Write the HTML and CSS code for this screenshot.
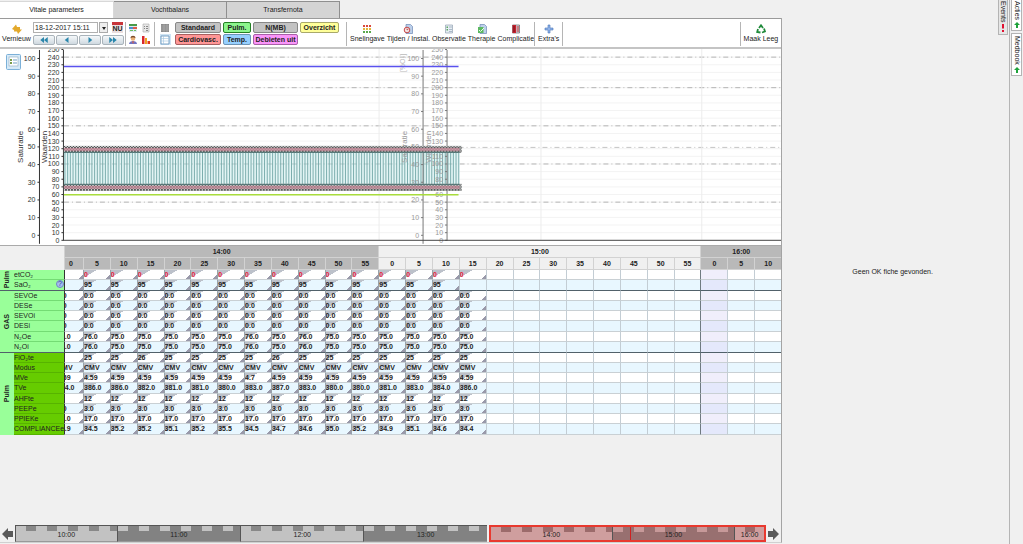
FILE: index.html
```html
<!DOCTYPE html>
<html lang="nl">
<head>
<meta charset="utf-8">
<title>Vitale parameters</title>
<link rel="stylesheet" href="styles.css">
</head>
<body>
<main class="main">
  <nav class="tabs">
    <button class="tab tab-active">Vitale parameters</button>
    <button class="tab">Vochtbalans</button>
    <button class="tab">Transfernota</button>
  </nav>
  <section class="panel">
    <div class="toolbar">
      <button class="tool tool-refresh">
        <svg class="icon" viewBox="0 0 10 10"><path d="M0 5 4 .5 5 3H8V5.500H4.500L4 7ZM10 5.500 6 10 5 7.500H2V5.500H6Z" fill="#e3a92c"/></svg>
        <span>Vernieuw</span>
      </button>
      <div class="dates">
        <div class="date-row">
          <input class="date" aria-label="Datum en tijd" value="18-12-2017 15:11">
          <button class="drop" aria-label="Kies datum"><svg class="arrow" viewBox="0 0 6 6"><path d="M1 2h4L3 5z" fill="#222"/></svg></button>
          <button class="now">NU</button>
        </div>
        <div class="nav-row">
          <button class="nav" aria-label="Ver terug"><svg viewBox="0 0 12 8"><path d="M6 0v8L1 4zM11 0v8L6 4z" fill="#2b86ab"/></svg></button>
          <button class="nav" aria-label="Terug"><svg viewBox="0 0 12 8"><path d="M8 0v8L3 4z" fill="#2b86ab"/></svg></button>
          <button class="nav" aria-label="Vooruit"><svg viewBox="0 0 12 8"><path d="M4 0v8l5-4z" fill="#2b86ab"/></svg></button>
          <button class="nav" aria-label="Ver vooruit"><svg viewBox="0 0 12 8"><path d="M1 0v8l5-4zM6 0v8l5-4z" fill="#2b86ab"/></svg></button>
        </div>
      </div>
      <div class="icon-grid ruled">
        <button class="mini" aria-label="Kalender"><svg class="icon" viewBox="0 0 10 10"><path d="M1 1h8v8H1z" fill="#dfeaf5"/><path d="M1 1h8v2H1z" fill="#4a9a4a"/><path d="M1 4h4v2H1z" fill="#4b8fd0"/><path d="M5 4h4v2H5z" fill="#e05a4a"/><path d="M2 7h3v1H2zM6 7h2v1H6z" fill="#6fbf5f"/></svg></button>
        <button class="mini" aria-label="Lijst"><svg class="icon" viewBox="0 0 10 10"><path d="M2 1h6v8H2z" fill="#e8e8e8" stroke="#aaa" stroke-width=".6"/><path d="M3 3h1v1H3zM5 3h2v1H5zM3 5h1v1H3zM5 5h2v1H5zM5 7h2v1H5z" fill="#888"/></svg></button>
        <button class="mini" aria-label="Patiënt"><svg class="icon" viewBox="0 0 10 10"><path d="M1 9c0-4 8-4 8 0z" fill="#6f74c4"/><circle cx="5" cy="3.500" r="2.300" fill="#eab178"/><path d="M2.500 3c0-3 5-3 5 0L5 2.200z" fill="#7a4a2a"/><path d="M4 6.500h2L5 9z" fill="#e05a3a"/></svg></button>
        <button class="mini" aria-label="Grafiek"><svg class="icon" viewBox="0 0 10 10"><path d="M1 1h2.500v8H1z" fill="#d8262c"/><path d="M4 3h2v6H4z" fill="#f0a020"/><path d="M6.500 6H9v3H6.500z" fill="#e0361c"/></svg></button>
      </div>
      <div class="filters ruled">
        <button class="mini" aria-label="Tabel"><svg class="icon" viewBox="0 0 10 10"><path d="M1 1h8v8H1z" fill="#8b8b8b"/><path d="M1 3h8M1 5h8M1 7h8M4 1v8M7 1v8" stroke="#b8b8b8" stroke-width=".5"/></svg></button>
        <button class="chip chip-gray">Standaard</button>
        <button class="chip chip-green">Pulm.</button>
        <button class="chip chip-gray">N(MB)</button>
        <button class="chip chip-yellow">Overzicht</button>
        <button class="mini mini-on" aria-label="Raster"><svg class="icon" viewBox="0 0 10 10"><path d="M1 1h8v8H1z" fill="#fff" stroke="#5d8eb8" stroke-width=".8"/><path d="M1 3.500h8M1 6h8M3.500 1v8" stroke="#9fc3de" stroke-width=".6"/></svg></button>
        <button class="chip chip-red">Cardiovasc.</button>
        <button class="chip chip-blue">Temp.</button>
        <button class="chip chip-pink">Debieten uit</button>
      </div>
      <div class="tools tools-entry ruled">
        <button class="tool"><svg class="icon" viewBox="0 0 10 10"><path d="M1 1h2v2H1zM4 1h2v2H4zM7 1h2v2H7z" fill="#d9483b"/><path d="M1 4h2v2H1zM4 4h2v2H4zM7 4h2v2H7z" fill="#e5b53a"/><path d="M1 7h2v2H1zM4 7h2v2H4zM7 7h2v2H7z" fill="#5aa84c"/></svg><span>Snelingave</span></button>
        <button class="tool"><svg class="icon" viewBox="0 0 10 10"><path d="M3 .5h4.500L9.500 2.500v7H3z" fill="#bcd0ea" stroke="#6d88b5" stroke-width=".7"/><circle cx="4" cy="6" r="2.800" fill="#f3e4e4" stroke="#c74747"/><path d="M4 4.500V6l1.500-1" fill="none" stroke="#a33" stroke-width=".7"/></svg><span>Tijden / Instal.</span></button>
        <button class="tool"><svg class="icon" viewBox="0 0 10 10"><path d="M1.500 1h7v8h-7z" fill="#e6edf3" stroke="#92a2b2" stroke-width=".7"/><path d="M2.500 2.500h1.500V4H2.500zM2.500 5h1.500v1.500H2.500z" fill="#5ba663"/><path d="M5 3h3M5 5.500h3M5 7.500h3" stroke="#90a4b6" stroke-width=".7"/></svg><span>Observatie</span></button>
        <button class="tool"><svg class="icon" viewBox="0 0 10 10"><path d="M3 .5h4.500L9.500 2.500v7H3z" fill="#bcd0ea" stroke="#6d88b5" stroke-width=".7"/><path d="M1 3h5.500v6H1z" fill="#5cb862"/><path d="M2 6l1.500 1.500L7 4" fill="none" stroke="#e9ffe9"/></svg><span>Therapie</span></button>
        <button class="tool"><svg class="icon" viewBox="0 0 10 10"><path d="M1.500 1h7v8h-7z" fill="#d5d8e2" stroke="#666" stroke-width=".7"/><path d="M1.500 1H5v8H1.500z" fill="#c6202c"/><path d="M5.500 3H8M5.500 5H8M5.500 7H8" stroke="#b22" stroke-width="1"/><path d="M3 2v6" stroke="#501018" stroke-width=".7"/></svg><span>Complicatie</span></button>
      </div>
      <div class="tools tools-extra ruled">
        <button class="tool"><svg class="icon" viewBox="0 0 10 10"><path d="M4 1h2v3h3v2H6v3H4V6H1V4h3z" fill="#8fb2e8" stroke="#4a76b8" stroke-width=".6"/></svg><span>Extra's</span></button>
      </div>
      <div class="tools ruled clear">
        <button class="tool"><svg class="icon" viewBox="0 0 10 10"><path d="M3 4 5 1.300 7 4M8 4.500 9 7.500 6 8.500M4.500 8.500 1.200 8 2 5" fill="none" stroke="#1f8a3a" stroke-width="1.800"/></svg><span>Maak Leeg</span></button>
      </div>
    </div>
    <svg class="chart" id="chart" viewBox="0 0 782 196" role="img" aria-label="Vitale parameters grafiek"></svg>
    <table class="grid" id="grid"></table>
    <div class="space"></div>
    <div class="timeline">
      <button class="step" aria-label="Vorige"><svg viewBox="0 0 13 14"><path d="M1 7 7 1v3h5v6H7v3z" fill="#595959"/></svg></button>
      <div class="track">
        <div class="seg seg-first light">10:00</div>
        <div class="seg dark">11:00</div>
        <div class="seg light">12:00</div>
        <div class="seg dark">13:00</div>
        <div class="range">
          <div class="seg light rose">14:00</div>
          <div class="seg dark rose-dark"><i class="cursor"></i>15:00</div>
          <div class="seg seg-last light rose">16:00</div>
        </div>
      </div>
      <button class="step" aria-label="Volgende"><svg viewBox="0 0 13 14"><path d="M12 7 6 1v3H1v6h5v3z" fill="#595959"/></svg></button>
    </div>
  </section>
</main>
<aside class="side">
  <p class="notice">Geen OK fiche gevonden.</p>
  <button class="vtab vtab-events">Events <svg class="bang" viewBox="0 0 4 8"><path d="M1 0h2v4.500H1zM1 6h2v2H1z" fill="#e01030"/></svg></button>
</aside>
<nav class="rail">
  <button class="vtab">Acties <svg class="plus" viewBox="0 0 6 6"><path d="M3 0 6 3H4v3H2V3H0z" fill="#1ea23a"/></svg></button>
  <button class="vtab">Medbook <svg class="plus" viewBox="0 0 6 6"><path d="M3 0 6 3H4v3H2V3H0z" fill="#1ea23a"/></svg></button>
</nav>
<script src="app.js"></script>
</body>
</html>
```
FILE: styles.css
```css
* { box-sizing: border-box; }

body {
  margin: 0;
  min-height: 100vh;
  display: flex;
  background: #f0f0f0;
  color: #222;
  font: 7px/8px "Liberation Sans", Arial, sans-serif;
}

button, input {
  margin: 0;
  padding: 0;
  border: 0;
  background: none;
  color: inherit;
  font: inherit;
}

.main { flex: 783 1 0; min-width: 0; display: flex; flex-direction: column; padding-bottom: 1px; }

.tabs { display: flex; height: 18px; padding-top: 1px; align-items: flex-end; }
.tab { width: 113px; height: 17px; background: #d4d4d4; border: 1px solid #8f8f8f; border-left: 0; border-bottom: 0; }
.tab-active { width: 114px; background: #fff; border-color: #d8d8d8; }

.panel { flex: 1; display: flex; flex-direction: column; border-right: 1px solid #a4a4a4; border-bottom: 1px solid #d0d0d0; }

.toolbar {
  display: flex;
  height: 31px;
  padding-top: 3px;
  background: #fff;
  border-top: 1px solid #9a9a9a;
  border-bottom: 2px solid #c4c4c4;
}
.ruled { border-left: 1px solid #b5b5b5; height: 24px; }
.icon { display: block; width: 10px; height: 10px; }
.tool { display: flex; flex-direction: column; align-items: center; gap: 1px; padding-top: 2px; white-space: nowrap; }
.tool-refresh { width: 33px; }

.dates { width: 92px; display: flex; flex-direction: column; gap: 2px; }
.date-row { display: flex; height: 11px; gap: 1px; }
.date { width: 65px; padding-left: 1px; background: #fff; border: 1px solid #b0b0b0; }
.drop { width: 9px; border: 1px solid #aaa; background: #eee; display: grid; place-items: center; }
.arrow { width: 6px; height: 6px; }
.now { width: 11px; margin-left: 3px; border-top: 3px solid #c8353a; background: #eadede; font-weight: bold; }
.nav-row { display: flex; gap: 1px; height: 10px; }
.nav { width: 22px; display: grid; place-items: center; border: 1px solid #a9b3ba; border-radius: 2px; background: linear-gradient(#f5f8fa, #cfd9e0); }
.nav svg { width: 10px; height: 6px; }

.icon-grid { display: grid; grid-template-columns: 11px 11px; gap: 1px 2px; padding-left: 2px; width: 29px; }
.mini { width: 11px; height: 11px; }
.mini-on { background: #cfe4f4; }

.filters { display: grid; grid-template-columns: 13px 46px 28px 45px 39px; gap: 1px 2px; padding-left: 5px; width: 192px; align-content: start; }
.chip { height: 11px; border: 1px solid #888; border-radius: 2px; font-weight: bold; white-space: nowrap; }
.chip-gray { background: #c3c3c3; }
.chip-green { background: #8cf58c; border-color: #258025; }
.chip-yellow { background: #ffff99; border-color: #a9a96a; }
.chip-red { background: #ff9696; border-color: #a86060; }
.chip-blue { background: #96d0ff; border-color: #6d94b5; }
.chip-pink { background: #fa94fa; border-color: #a860a8; }

.tools { display: flex; gap: 2px; padding: 0 3px; align-items: flex-start; }
.tools-entry { padding-right: 0; }
.tools-extra { border-right: 1px solid #b5b5b5; }
.clear { margin-left: auto; }

.chart { display: block; width: 100%; background: #fff; font-size: 7px; border-bottom: 1px solid #aaa; }

.grid { width: 100%; table-layout: fixed; border-collapse: separate; border-spacing: 0; font-weight: bold; }
.grid th, .grid td { padding: 0; height: 10px; line-height: 9px; overflow: hidden; white-space: nowrap; }
.col-group { width: 14px; }
.col-name { width: 50px; }
.col-part { width: 19px; }
.grid thead th { height: 12px; line-height: 11px; border-left: 1px solid #d2d2d2; border-bottom: 1px solid #d2d2d2; }
.grid thead .blank { border: 0; background: #f0f0f0; }
.grid thead .hour-gray { background: #b9b9b9; }
.grid thead .part { padding-right: 6px; }
.grid tbody tr:nth-child(4n) > * { height: 11px; }
.grid tbody.rule tr:last-child > * { height: 11px; border-bottom: 1px solid #51616a; }
.grid tbody td { border-left: 1px solid #c3cdd4; border-bottom: 1px solid #c9d0d4; background-color: #fff; }
.grid tbody tr:nth-child(even) td { background-color: #e8f7ff; }
.grid tbody td.future { background-color: #f0eefb; border-left-color: #6f7a80; }
.grid tbody tr:nth-child(even) td.future { background-color: #e4e8fb; }
.grid tbody td.hour { border-left-color: #6f7a80; }
.grid tbody td.filled {
  border-left-color: #98a2aa;
  background-image: linear-gradient(150deg, #bcc1ca 0 40%, transparent 41%), linear-gradient(315deg, #99a 0 50%, transparent 51%);
  background-size: 16px 9px, 4px 4px;
  background-position: left top, right bottom;
  background-repeat: no-repeat;
}
.grid tbody td.cut { background-image: linear-gradient(315deg, #99a 0 50%, transparent 51%); background-size: 4px 4px; background-position: right bottom; border-left-color: #333; }
.cut .value { margin-left: -8px; }
.red { color: #e8203c; }
.grid tbody .name { text-align: left; font-weight: normal; border-bottom: 1px solid #74dc74; background: #99ff99; }
.grid tbody.dark .name { background: #66cc00; border-bottom-color: #57b300; }
.grid tbody tr > .group { background: #99ff99; vertical-align: middle; }
.grid tbody.rule tr > .group { border-bottom: 1px solid #51616a; }
.group span { display: block; margin: 0 auto; writing-mode: vertical-rl; transform: rotate(180deg); line-height: 12px; width: 12px; }
.help { float: right; width: 8px; height: 8px; border-radius: 4px; background: #a6bdf0; border: 1px solid #6f86c4; color: #2c3f90; line-height: 6px; text-align: center; }

.space { flex: 1; }

.timeline { display: flex; height: 17px; }
.step { width: 15px; display: grid; place-items: center; }
.step svg { width: 13px; height: 14px; }
.track { flex: 1; display: flex; color: #222; }
.seg { flex: 124 1 0; position: relative; height: 17px; padding-top: 5px; text-align: center; border: 1px solid #555; border-right: 0; border-bottom-color: #999; background-position: 10px 0; background-size: 21px 5px; background-repeat: repeat-x; }
.seg-first { flex-grow: 102; }
.light { background-color: #c2c2c2; background-image: linear-gradient(90deg, #888 50%, transparent 50%); }
.dark { background-color: #828282; background-position: 0 0; background-image: linear-gradient(90deg, #c2c2c2 50%, transparent 50%); }
.range { flex: 277 1 0; display: flex; margin-left: 2px; border: 2px solid #e8392f; }
.range .seg { height: 13px; padding-top: 4px; border-width: 0 0 0 1px; }
.range .seg:first-child { border-left: 0; }
.range .seg-last { flex-grow: 30; }
.rose { background-color: #cf9e9e; background-image: linear-gradient(90deg, #9c6b6b 50%, transparent 50%); }
.rose-dark { background-color: #987070; background-image: linear-gradient(90deg, #c79999 50%, transparent 50%); }
.cursor { position: absolute; left: 14%; top: 0; bottom: 0; border-left: 1px solid #d02020; }

.side { flex: 227 1 0; position: relative; display: grid; place-items: center; border-right: 1px solid #b5b5b5; }
.notice { margin: 0; padding-right: 6px; }
.rail { width: 13px; display: flex; flex-direction: column; align-items: center; gap: 2px; }
.vtab { writing-mode: vertical-rl; display: flex; align-items: center; gap: 2px; width: 11px; padding: 2px 0; background: #fff; border: 1px solid #b4b4b4; }
.rail .vtab:first-child { border-top: 0; padding-top: 1px; }
.vtab-events { position: absolute; top: 0; right: 1px; width: 10px; padding-top: 1px; background: #e6e6e6; border-top: 0; }
.bang { width: 4px; height: 8px; }
.plus { width: 6px; height: 6px; }
```
FILE: app.js
```js
const rep = (v, n) => Array(n).fill(v);
const HOURS = [
  { label: "14:00", from: 0, n: 12, gray: true },
  { label: "15:00", from: 12, n: 12, gray: false },
  { label: "16:00", from: 24, n: 3, gray: true }
];
const GROUPS = [
  { label: "Pulm", rows: [
    ["etCO₂", rep("0", 16)],
    ["SaO₂", rep("95", 15)]
  ] },
  { label: "GAS", rows: [
    ["SEVOe", rep("0.0", 16)],
    ["DESe", rep("0.0", 16)],
    ["SEVOi", rep("0.0", 16)],
    ["DESi", rep("0.0", 16)],
    ["N₂Oe", "75.0 76.0 75.0 75.0 75.0 75.0 75.0 76.0 75.0 76.0 75.0 75.0 75.0 75.0 75.0 75.0".split(" ")],
    ["N₂Oi", "75.0 76.0 75.0 75.0 75.0 75.0 75.0 76.0 75.0 76.0 75.0 75.0 75.0 75.0 75.0 75.0".split(" ")]
  ] },
  { label: "Pulm", dark: true, rows: [
    ["FiO₂te", "25 25 25 26 25 25 25 25 26 25 25 25 25 25 25 25".split(" ")],
    ["Modus", rep("CMV", 16)],
    ["MVe", rep("4.59", 16).map((v, i) => (i === 7 ? "4.7" : v))],
    ["TVe", "384.0 386.0 386.0 382.0 381.0 381.0 380.0 383.0 387.0 383.0 380.0 380.0 381.0 383.0 384.0 386.0".split(" ")],
    ["AHFte", rep("12", 16)],
    ["PEEPe", rep("3.0", 16)],
    ["PPIEKe", rep("17.0", 16)],
    ["COMPLIANCEe", "34.9 34.5 35.2 35.2 35.1 35.2 35.5 34.5 34.7 34.6 35.0 35.2 34.9 35.1 34.6 34.4".split(" ")]
  ] }
];

function buildGrid() {
  let h = '<colgroup><col class="col-group"><col class="col-name"><col class="col-part">' + "<col>".repeat(26) + "</colgroup><thead><tr><th class='blank' colspan='2' rowspan='2'></th>";
  for (const g of HOURS) h += `<th colspan="${g.n}" class="${g.gray ? "hour-gray" : ""}">${g.label}</th>`;
  h += "</tr><tr>";
  for (const g of HOURS)
    for (let i = 0; i < g.n; i++)
      h += `<th class="${g.gray ? "hour-gray" : ""} ${g.from + i === 0 ? "part" : ""}">${i * 5}</th>`;
  h += "</tr></thead>";
  GROUPS.forEach((g, gi) => {
    h += `<tbody class="${gi < 2 ? "rule" : ""} ${g.dark ? "dark" : ""}">`;
    g.rows.forEach(([name, values], ri) => {
      h += "<tr>";
      if (ri === 0) h += `<th class="group" rowspan="${g.rows.length}"><span>${g.label}</span></th>`;
      h += `<th class="name">${name === "SaO₂" ? '<span class="help">?</span>' : ""}${name}</th>`;
      for (let c = 0; c < 27; c++) {
        const v = values[c];
        const cls = [];
        if (v) cls.push("filled");
        if (c === 0) cls.push("cut");
        if (c === 12) cls.push("hour");
        if (c === 24) cls.push("future");
        if (v === "0") cls.push("red");
        h += `<td class="${cls.join(" ")}">${v ? `<span class="value">${v}</span>` : ""}</td>`;
      }
      h += "</tr>";
    });
    h += "</tbody>";
  });
  document.getElementById("grid").innerHTML = h;
}

function buildChart() {
  const y = v => 191.5 - v * 0.764;
  const sat = v => 186.5 - v * 1.77;
  const line = (x1, y1, x2, y2, stroke, extra = "") => `<line x1="${x1}" y1="${y1}" x2="${x2}" y2="${y2}" stroke="${stroke}" ${extra}/>`;
  let s = '<defs><pattern id="hatch" width="3" height="3" patternUnits="userSpaceOnUse"><path d="M0 0 3 3M3 0 0 3" stroke="#333" stroke-width=".8"/></pattern></defs>';
  for (let v = 10; v <= 240; v += 10) s += line(64, y(v), 782, y(v), "#f3f3f3");
  for (const v of [240, 200, 150, 100, 50]) s += line(64, y(v), 782, y(v), "#b5b5b5", 'stroke-dasharray="5 3 1 3"');
  s += line(459, 98.5, 782, 98.5, "#c4c4c4", 'stroke-dasharray="5 3 1 3"');
  for (const x of [379.5, 541.5, 702.5]) s += line(x, 0, x, 191, "#ececec");
  s += '<rect x="64" y="101" width="396" height="34" fill="#e3f5f5"/>';
  s += line(64, y(100), 460, y(100), "#b4cccc", 'stroke-dasharray="5 3 1 3"');
  for (let x = 65; x < 460; x += 2.7) s += line(x.toFixed(1), 101, x.toFixed(1), 136, "#6fa5a5", 'stroke-width=".9"');

  const axes = (x1, x2, ink, text) => {
    let a = line(x1, 1, x1, 195, ink) + line(x2, 1, x2, 192, ink);
    for (let v = 0; v <= 100; v += 10)
      a += line(x1 - 2, sat(v), x1, sat(v), ink) + `<text x="${x1 - 4}" y="${sat(v) + 2.5}" text-anchor="end" fill="${text}">${v}</text>`;
    for (let v = 0; v <= 250; v += 10)
      a += line(x2 - 2, y(v), x2, y(v), ink) + `<text x="${x2 - 4}" y="${y(v) + 2.5}" text-anchor="end" fill="${text}">${v}</text>`;
    const title = (x, t) => `<text font-size="8" text-anchor="middle" fill="${text}" transform="translate(${x} 98) rotate(-90)">${t}</text>`;
    return a + title(x1 - 16, "Saturatie") + title(x2 - 16, "Waarden");
  };
  s += axes(39.5, 63.5, "#333", "#333");
  s += axes(423.5, 447.5, "#777", "#999");
  s += '<text font-size="7" fill="#bbb" text-anchor="middle" transform="translate(405 14) rotate(-90)">[%O₂]</text>';
  for (const top of [97, 135]) {
    s += `<rect x="64" y="${top}" width="398" height="7" fill="#d8dcdc"/><rect x="64" y="${top}" width="398" height="7" fill="url(#hatch)"/>`;
    s += `<rect x="64" y="${top + 2}" width="396" height="3" fill="#c98a9a" fill-opacity=".75"/>`;
  }
  s += line(64, 103.5, 460, 103.5, "#4f7474") + line(64, 135.5, 460, 135.5, "#4f7474");
  s += line(64, 17.5, 459, 17.5, "#5a52ee", 'stroke-width="1.500"');
  s += line(64, 146, 459, 146, "#a8dc3c", 'stroke-width="1.500"');
  s += line(64, 191.5, 782, 191.5, "#444");
  s += '<rect x="6.500" y="5.500" width="14" height="15" rx="1" fill="#d6eaf8" stroke="#7ab0d8"/><rect x="9" y="8" width="9" height="9" fill="#fff" stroke="#8aa8bc" stroke-width=".6"/><path d="M10 10h2v2h-2zM10 13h2v2h-2z" fill="#7a9c4c"/><path d="M13 11h4M13 14h4" stroke="#6fa0c4"/>';
  document.getElementById("chart").innerHTML = s;
}

buildChart();
buildGrid();
```
